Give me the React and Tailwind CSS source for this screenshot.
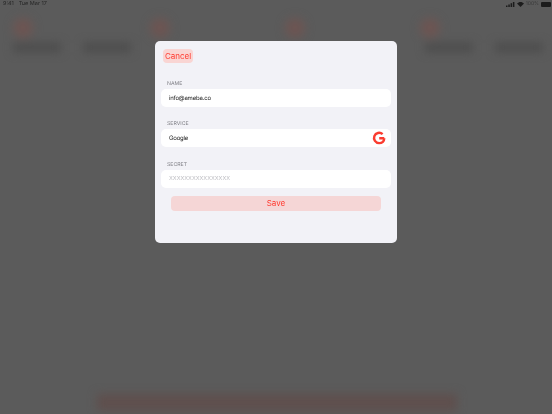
import React from 'react';

const StatusBar = () => (
  <div className="relative z-10 flex justify-between items-center h-2 pl-[3px] pr-[1px] text-[5.5px] leading-none text-[#262626] blur-[0.25px]">
    <div className="flex gap-[5px] pt-[2px]">
      <span>9:41</span>
      <span>Tue Mar 17</span>
    </div>
    <div className="flex items-center gap-[2px]">
      <svg width="9" height="5" viewBox="0 0 9 5" fill="#1c1c1c">
        <rect x="0" y="3.5" width="1.5" height="1.5" />
        <rect x="2.3" y="2.5" width="1.5" height="2.5" />
        <rect x="4.6" y="1.2" width="1.5" height="3.8" />
        <rect x="6.9" y="0" width="1.5" height="5" />
      </svg>
      <svg width="7" height="5" viewBox="0 0 7 5" fill="#1c1c1c">
        <path d="M0 1.6C2-.5 5-.5 7 1.6L3.5 5z" />
      </svg>
      <span className="text-[5px] text-[#3a3a3a]">100%</span>
      <div className="w-[10px] h-[5px] rounded-[1px] bg-[#1c1c1c]" />
    </div>
  </div>
);

const Field = ({ label, value, placeholder, icon }) => (
  <div className="flex flex-col">
    <label className="h-[13px] pl-[6px] text-[5.2px] leading-[17px] text-[#7e7e84]">{label}</label>
    <div className="h-[18px] rounded-[5px] bg-white flex items-center justify-between pl-2 pr-[5px]">
      {placeholder ? (
        <span className="pt-[1px] text-[5.6px] text-[#bdbdc2]">{placeholder}</span>
      ) : (
        <span className="pt-[1px] text-[6px] tracking-[-0.2px] text-[#222222]">{value}</span>
      )}
      {icon}
    </div>
  </div>
);

const GoogleG = () => (
  <svg width="14" height="14" viewBox="0 0 24 24" fill="none" className="shrink-0">
    <path
      d="M21 12.4H12.4M21 12.4c0 5-3.7 8.4-8.7 8.4a8.8 8.8 0 1 1 5.9-15.3"
      stroke="#fa3c30"
      strokeWidth="4.2"
    />
  </svg>
);

const BlurTile = ({ offset, labels }) => (
  <div className="w-[135px]">
    <div className={`w-[20px] h-[20px] rounded-full bg-[#6d5552] ${offset}`} />
    {labels && (
      <div className={`flex gap-[22px] mt-[5px] ${labels}`}>
        <div className="w-[48px] h-[9px] bg-[#4c4c4c]" />
        <div className="w-[48px] h-[9px] bg-[#4c4c4c]" />
      </div>
    )}
  </div>
);

export default function App() {
  return (
    <div className="relative w-[552px] h-[414px] overflow-hidden bg-[#5b5b5b] font-['Inter','Liberation_Sans',sans-serif] [text-rendering:geometricPrecision]">
      <StatusBar />

      <div className="absolute inset-0 blur-[5px]">
        <div className="flex pt-[18px] pl-[13px]">
          <BlurTile offset="ml-0" labels="ml-0" />
          <BlurTile offset="ml-[2px]" />
          <BlurTile offset="ml-[2px]" />
          <BlurTile offset="ml-[3px]" labels="ml-[8px]" />
        </div>
        <div className="absolute left-[97px] top-[394px] w-[360px] h-[17px] bg-[#5f4f4d]" />
      </div>

      <div className="absolute left-[155px] top-[41px] w-[242px] h-[202px] rounded-[5px] bg-[#f2f2f7] px-[6px] pt-2 flex flex-col blur-[0.25px]">
        <button className="self-start ml-[2px] h-[14px] w-[30px] rounded-[4px] bg-[#f9d5d3] text-[#ff3b30] text-[8px] leading-[14px] text-center">
          Cancel
        </button>
        <div className="mt-[13px] flex flex-col gap-[9px]">
          <Field label="NAME" value="info@ameba.co" />
          <Field label="SERVICE" value="Google" icon={<GoogleG />} />
          <div className="mt-[1px]">
            <Field label="SECRET" placeholder="XXXXXXXXXXXXXXXX" />
          </div>
        </div>
        <button className="mx-[10px] mt-[8px] h-[15px] rounded-[4px] bg-[#f5d6d6] text-[#ff3b30] text-[8px] leading-[15px] text-center">
          Save
        </button>
      </div>
    </div>
  );
}
